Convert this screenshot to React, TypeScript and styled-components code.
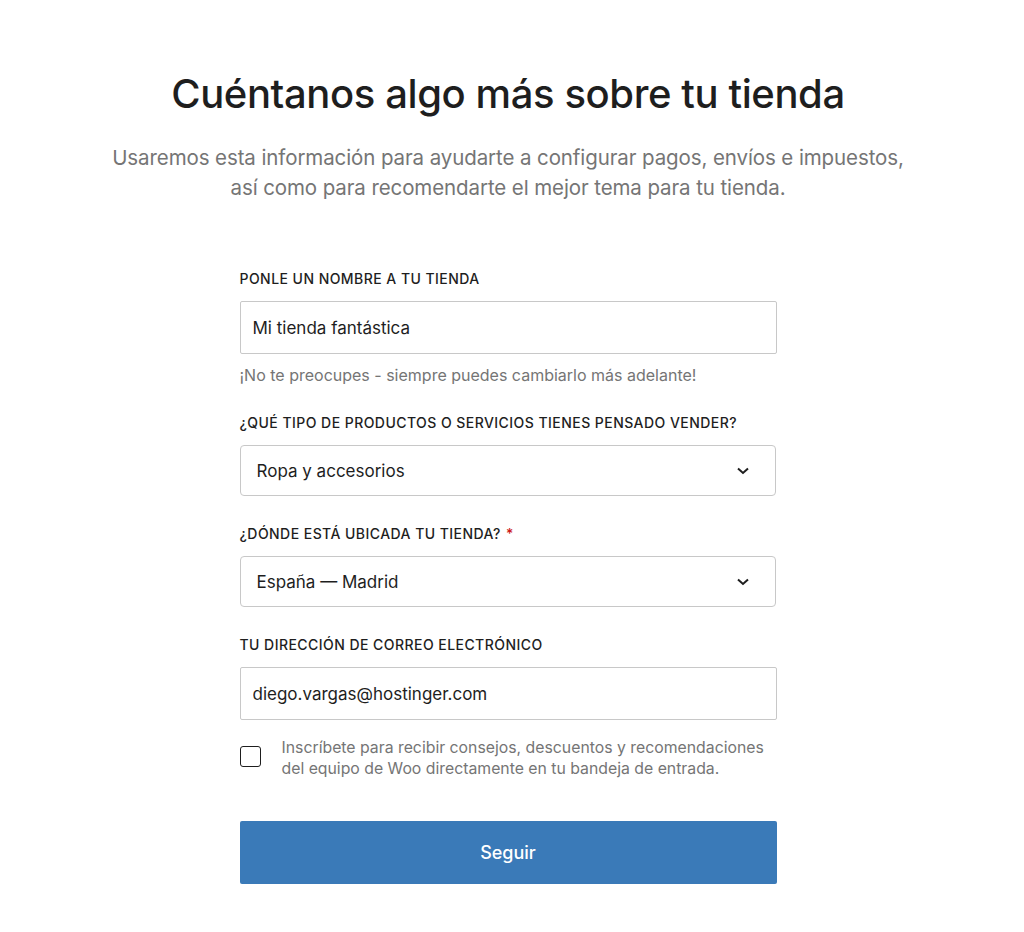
import React from 'react';
import styled, { createGlobalStyle } from 'styled-components';

const GlobalStyle = createGlobalStyle`
  body {
    margin: 0;
    background: #ffffff;
    font-family: Inter, "Noto Sans", sans-serif;
    color: #1e1e1e;
  }
`;

const Page = styled.main`
  display: flex;
  flex-direction: column;
  align-items: center;
  padding: 70px 8px 40px 0;
`;

const Title = styled.h1`
  margin: 0;
  font-size: 40px;
  line-height: 48px;
  font-weight: 500;
  letter-spacing: -0.4px;
  color: #1e1e1e;
`;

const Subtitle = styled.p`
  margin: 25px 0 0;
  text-align: center;
  font-size: 20.5px;
  line-height: 30px;
  color: #757575;
  letter-spacing: -0.1px;
`;

const Form = styled.form`
  width: 537px;
  margin-top: 68px;
  display: flex;
  flex-direction: column;
`;

const Field = styled.div<{ $tight?: boolean }>`
  display: flex;
  flex-direction: column;
  margin-bottom: ${({ $tight }) => ($tight ? '17px' : '30px')};
`;

const Label = styled.label`
  font-size: 14px;
  line-height: 16px;
  font-weight: 500;
  letter-spacing: 0.45px;
  text-transform: uppercase;
  color: #1e1e1e;
  margin-bottom: 14px;
`;

const Required = styled.span`
  color: #cc1818;
  margin-left: 5px;
`;

const TextInput = styled.input`
  box-sizing: border-box;
  width: 100%;
  height: 53px;
  padding: 0 12px;
  border: 1px solid #c8c8c8;
  border-radius: 2px;
  font-family: inherit;
  font-size: 17px;
  color: #1e1e1e;
  background: #fff;
  outline: none;
`;

const Help = styled.p`
  margin: 11px 0 0;
  font-size: 16px;
  line-height: 20px;
  color: #757575;
`;

const SelectBox = styled.div`
  box-sizing: border-box;
  width: 536px;
  height: 51px;
  padding: 0 24px 0 16px;
  border: 1px solid #c8c8c8;
  border-radius: 4px;
  display: flex;
  align-items: center;
  justify-content: space-between;
  font-size: 17px;
  color: #1e1e1e;
`;

const CheckRow = styled.div`
  display: flex;
  align-items: flex-start;
  gap: 21px;
`;

const Box = styled.span`
  box-sizing: border-box;
  flex: none;
  width: 21px;
  height: 21px;
  margin-top: 9px;
  border: 1.5px solid #1e1e1e;
  border-radius: 3px;
`;

const CheckText = styled.span`
  font-size: 15.8px;
  line-height: 21px;
  color: #757575;
`;

const Button = styled.button`
  margin-top: 42px;
  width: 537px;
  height: 63px;
  border: none;
  border-radius: 2px;
  background: #3a7ab8;
  color: #fff;
  font-family: inherit;
  font-size: 18px;
  font-weight: 500;
`;

const Chevron = () => (
  <svg width="16" height="16" viewBox="0 0 16 16" fill="none">
    <path d="M3 5.5l5 4.5 5-4.5" stroke="#1e1e1e" strokeWidth="2" />
  </svg>
);

const Select: React.FC<{ value: string }> = ({ value }) => (
  <SelectBox>
    <span>{value}</span>
    <Chevron />
  </SelectBox>
);

const App: React.FC = () => (
  <>
    <GlobalStyle />
    <Page>
      <Title>Cuéntanos algo más sobre tu tienda</Title>
      <Subtitle>
        Usaremos esta información para ayudarte a configurar pagos, envíos e impuestos,
        <br />
        así como para recomendarte el mejor tema para tu tienda.
      </Subtitle>
      <Form>
        <Field>
          <Label>Ponle un nombre a tu tienda</Label>
          <TextInput defaultValue="Mi tienda fantástica" />
          <Help>¡No te preocupes - siempre puedes cambiarlo más adelante!</Help>
        </Field>
        <Field>
          <Label>¿Qué tipo de productos o servicios tienes pensado vender?</Label>
          <Select value="Ropa y accesorios" />
        </Field>
        <Field>
          <Label>
            ¿Dónde está ubicada tu tienda?<Required>*</Required>
          </Label>
          <Select value="España — Madrid" />
        </Field>
        <Field $tight>
          <Label>Tu dirección de correo electrónico</Label>
          <TextInput defaultValue="diego.vargas@hostinger.com" />
        </Field>
        <CheckRow>
          <Box />
          <CheckText>
            Inscríbete para recibir consejos, descuentos y recomendaciones
            <br />
            del equipo de Woo directamente en tu bandeja de entrada.
          </CheckText>
        </CheckRow>
        <Button type="button">Seguir</Button>
      </Form>
    </Page>
  </>
);

export default App;
